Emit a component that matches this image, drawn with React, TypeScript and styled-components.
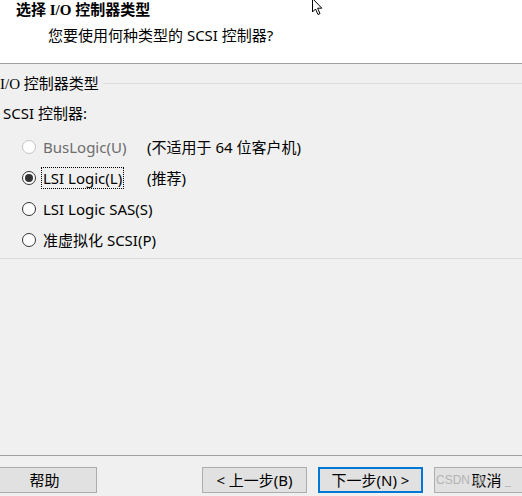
import React from "react";
import styled, { createGlobalStyle } from "styled-components";

const Global = createGlobalStyle`
  html, body { margin: 0; padding: 0; background: #f0f0f0; }
  body {
    font-family: "Noto Sans", "Noto Sans CJK SC", sans-serif;
    font-size: 15px;
    color: #000;
  }
`;

const Window = styled.div`
  position: relative;
  width: 522px;
  height: 496px;
  overflow: hidden;
  display: flex;
  flex-direction: column;
  background: #f0f0f0;
`;

const Header = styled.div`
  height: 63px;
  background: #fff;
  border-bottom: 1px solid #a0a0a0;
  box-sizing: content-box;
  display: flex;
  flex-direction: column;
`;

const Title = styled.div`
  font-family: "Liberation Serif", "Noto Sans CJK SC", serif;
  font-weight: bold;
  font-size: 15px;
  line-height: 20px;
  padding-left: 16px;
`;

const Subtitle = styled.div`
  font-size: 15px;
  line-height: 20px;
  padding-left: 48px;
  margin-top: 5px;
`;

const GroupHeader = styled.div`
  margin-top: 10px;
  height: 20px;
  display: flex;
  align-items: center;
  line-height: 20px;
`;

const GroupLabel = styled.span`
  white-space: nowrap;
  font-family: "Liberation Serif", "Noto Sans CJK SC", serif;
`;

const GroupLine = styled.div`
  flex: 1;
  height: 1px;
  background: #dcdcdc;
  margin-left: 4px;
  margin-top: -1px;
`;

const FieldLabel = styled.div`
  margin-top: 9px;
  height: 20px;
  line-height: 20px;
  padding-left: 3px;
`;

const RadioList = styled.div`
  margin-top: 8px;
  display: grid;
  grid-template-columns: 147px 1fr;
  grid-auto-rows: 31px;
  align-items: center;
`;

const RadioCell = styled.label<{ $disabled?: boolean }>`
  display: flex;
  align-items: center;
  padding-left: 22px;
  color: ${(p) => (p.$disabled ? "#6d6d6d" : "#000")};
  white-space: nowrap;
`;

const Circle = styled.span<{ $checked?: boolean; $disabled?: boolean }>`
  width: 14px;
  height: 14px;
  box-sizing: border-box;
  border-radius: 50%;
  border: 1px solid ${(p) => (p.$disabled ? "#c4c4c4" : "#333")};
  background: #fff;
  display: flex;
  align-items: center;
  justify-content: center;
  flex: none;
  &::after {
    content: "";
    display: ${(p) => (p.$checked ? "block" : "none")};
    width: 8px;
    height: 8px;
    border-radius: 50%;
    background: #333;
  }
`;

const RadioText = styled.span<{ $focused?: boolean }>`
  margin-left: 6px;
  height: 20px;
  line-height: 20px;
  padding: 0 1px;
  outline: ${(p) => (p.$focused ? "1px dotted #000" : "none")};
  outline-offset: 0;
`;

const Note = styled.span`
  white-space: nowrap;
  line-height: 20px;
`;

const GroupBottom = styled.div`
  margin-top: 3px;
  height: 1px;
  background: #dcdcdc;
`;

const Spacer = styled.div`
  flex: 1;
`;

const Footer = styled.div`
  border-top: 1px solid #a0a0a0;
  padding: 11px 0 3px;
  display: flex;
  align-items: center;
`;

const Button = styled.div<{ $default?: boolean; $gap?: number }>`
  flex: none;
  width: 105px;
  height: 26px;
  box-sizing: border-box;
  margin-left: ${(p) => p.$gap ?? 0}px;
  background: #e1e1e1;
  border: ${(p) => (p.$default ? "2px solid #0078d7" : "1px solid #adadad")};
  display: flex;
  align-items: center;
  justify-content: center;
  font-size: 15px;
  line-height: 20px;
  white-space: nowrap;
  position: relative;
`;

const Watermark = styled.span`
  position: absolute;
  left: 1px;
  top: 4px;
  color: #b4b4b4;
  font-family: "Liberation Sans", sans-serif;
  font-size: 12px;
  line-height: 16px;
  pointer-events: none;
`;

const WatermarkTail = styled.span`
  position: absolute;
  left: 70px;
  top: 3px;
  color: #b4b4b4;
  font-size: 13px;
  line-height: 18px;
`;

const Cursor = styled.svg`
  position: absolute;
  left: 311px;
  top: -3px;
`;

const radios = [
  { label: "BusLogic(U)", note: "(不适用于 64 位客户机)", disabled: true },
  { label: "LSI Logic(L)", note: "(推荐)", checked: true, focused: true },
  { label: "LSI Logic SAS(S)" },
  { label: "准虚拟化 SCSI(P)" },
];

export default function App() {
  return (
    <Window>
      <Global />
      <Header>
        <Title>选择 I/O 控制器类型</Title>
        <Subtitle>您要使用何种类型的 SCSI 控制器?</Subtitle>
      </Header>
      <GroupHeader>
        <GroupLabel>I/O 控制器类型</GroupLabel>
        <GroupLine />
      </GroupHeader>
      <FieldLabel>SCSI 控制器:</FieldLabel>
      <RadioList>
        {radios.map((r) => (
          <React.Fragment key={r.label}>
            <RadioCell $disabled={r.disabled}>
              <Circle $checked={r.checked} $disabled={r.disabled} />
              <RadioText $focused={r.focused}>{r.label}</RadioText>
            </RadioCell>
            <Note>{r.note ?? ""}</Note>
          </React.Fragment>
        ))}
      </RadioList>
      <GroupBottom />
      <Spacer />
      <Footer>
        <Button $gap={-8}>帮助</Button>
        <Button $gap={105}>&lt; 上一步(B)</Button>
        <Button $gap={11} $default>
          下一步(N) &gt;
        </Button>
        <Button $gap={11}>
          取消
          <Watermark>CSDN @</Watermark>
          <WatermarkTail>_</WatermarkTail>
        </Button>
      </Footer>
      <Cursor width="16" height="20" viewBox="0 0 16 20">
        <path
          d="M1.5 1.5 L1.5 15 L4.5 12 L7 17.5 L9 16.6 L6.6 11.2 L10.8 11.2 Z"
          fill="#fff"
          stroke="#000"
          strokeWidth="1"
          strokeLinejoin="miter"
        />
      </Cursor>
    </Window>
  );
}
